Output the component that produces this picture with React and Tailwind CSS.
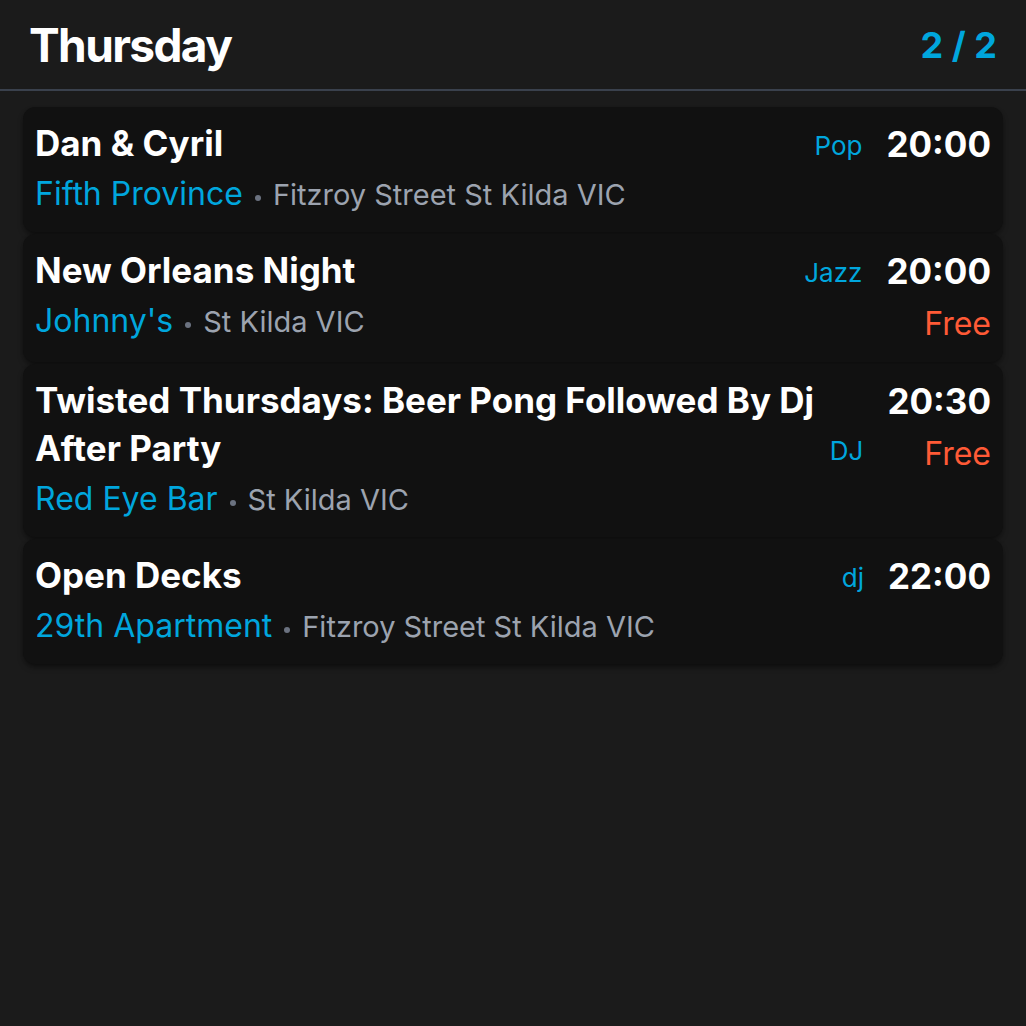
import React from 'react';

const events = [
  { title: 'Dan & Cyril', tag: 'Pop', time: '20:00', venue: 'Fifth Province', address: 'Fitzroy Street St Kilda VIC', free: false },
  { title: 'New Orleans Night', tag: 'Jazz', time: '20:00', venue: "Johnny's", address: 'St Kilda VIC', free: true },
  { title: 'Twisted Thursdays: Beer Pong Followed By Dj After Party', tag: 'DJ', time: '20:30', venue: 'Red Eye Bar', address: 'St Kilda VIC', free: true },
  { title: 'Open Decks', tag: 'dj', time: '22:00', venue: '29th Apartment', address: 'Fitzroy Street St Kilda VIC', free: false },
];

export default function App() {
  return (
    <div className="min-h-screen bg-[#1b1b1b] font-['Inter','Liberation_Sans',sans-serif] text-white">
      {/* Header */}
      <header className="flex items-center justify-between h-[91px] px-[29px] border-b-2 border-[#3a414d]">
        <h1 className="text-[46px] font-bold leading-none tracking-[-1.6px]">Thursday</h1>
        <span className="text-[36px] font-bold text-[#00a6dd] leading-none">2 / 2</span>
      </header>

      {/* Events */}
      <main className="px-[23px] pt-4 flex flex-col gap-[2px]">
        {events.map((e) => (
          <div key={e.title} className="flex items-start bg-[#111111] rounded-xl shadow-md shadow-black/40 px-3 pt-3 pb-[11px]">
            <div className="flex-1 min-w-0">
              <div className="flex items-end justify-between gap-1">
                <h2 className="text-[35px] font-bold leading-[48px]">{e.title}</h2>
                <span className="shrink-0 text-[26px] leading-[42px] text-[#00a6dd]">{e.tag}</span>
              </div>
              <p className="mt-[10px] leading-[44px]">
                <span className="text-[32px] leading-none text-[#00a6dd]">{e.venue}</span>
                <span className="inline-block w-[6px] h-[6px] rounded-full bg-[#6b7280] mx-[12px] mb-[4px]" />
                <span className="text-[29px] leading-none text-[#9ca3af]">{e.address}</span>
              </p>
            </div>
            <div className="ml-[24px] flex flex-col items-end">
              <span className="text-[35px] font-bold leading-[50px]">{e.time}</span>
              {e.free && <span className="text-[32px] text-[#ff5a36] leading-[55px]">Free</span>}
            </div>
          </div>
        ))}
      </main>
    </div>
  );
}
